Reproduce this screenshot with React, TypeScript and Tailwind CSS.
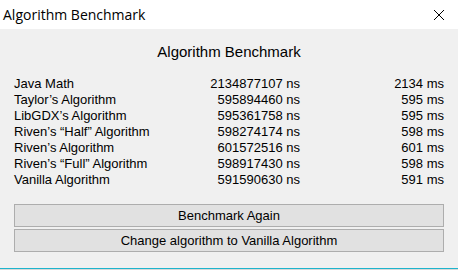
import React from "react";

const rows: [string, string, string][] = [
  ["Java Math", "2134877107 ns", "2134 ms"],
  ["Taylor\u2019s Algorithm", "595894460 ns", "595 ms"],
  ["LibGDX\u2019s Algorithm", "595361758 ns", "595 ms"],
  ["Riven\u2019s \u201cHalf\u201d Algorithm", "598274174 ns", "598 ms"],
  ["Riven\u2019s Algorithm", "601572516 ns", "601 ms"],
  ["Riven\u2019s \u201cFull\u201d Algorithm", "598917430 ns", "598 ms"],
  ["Vanilla Algorithm", "591590630 ns", "591 ms"],
];

export default function App() {
  return (
    <div className="w-[458px] h-[270px] flex flex-col bg-[#f0f0f0] overflow-hidden" style={{ fontFamily: '"Liberation Sans", Arial, sans-serif' }}>
      <div className="h-[29px] bg-white flex items-center justify-between shrink-0">
        <span className="pl-[3px] text-[14px] text-black" style={{ fontFamily: '"Open Sans", "Noto Sans", sans-serif' }}>Algorithm Benchmark</span>
        <svg width="12" height="12" viewBox="0 0 12 12" className="mr-[13px]">
          <path d="M1 1 L11 11 M11 1 L1 11" stroke="#000" strokeWidth="1" />
        </svg>
      </div>
      <div className="flex-1 flex flex-col px-[14px]">
        <div className="text-center text-[15px] text-black mt-[14px] leading-[18px]">Algorithm Benchmark</div>
        <div className="mt-[15px] flex flex-col text-[13px] text-black leading-[16px]">
          {rows.map((r) => (
            <div key={r[0]} className="flex">
              <span className="w-[186px]">{r[0]}</span>
              <span className="w-[100px] text-right">{r[1]}</span>
              <span className="flex-1 text-right">{r[2]}</span>
            </div>
          ))}
        </div>
        <div className="mt-[16px] flex flex-col gap-[2px] w-[430px]">
          <button className="h-[23px] bg-[#e1e1e1] border border-[#adadad] text-[13px] text-black">Benchmark Again</button>
          <button className="h-[23px] bg-[#e1e1e1] border border-[#adadad] text-[13px] text-black">Change algorithm to Vanilla Algorithm</button>
        </div>
      </div>
      <div className="h-[1px] bg-[#1eb4cc] shrink-0" />
      <div className="h-[1px] bg-[#d9d9d9] shrink-0" />
    </div>
  );
}
